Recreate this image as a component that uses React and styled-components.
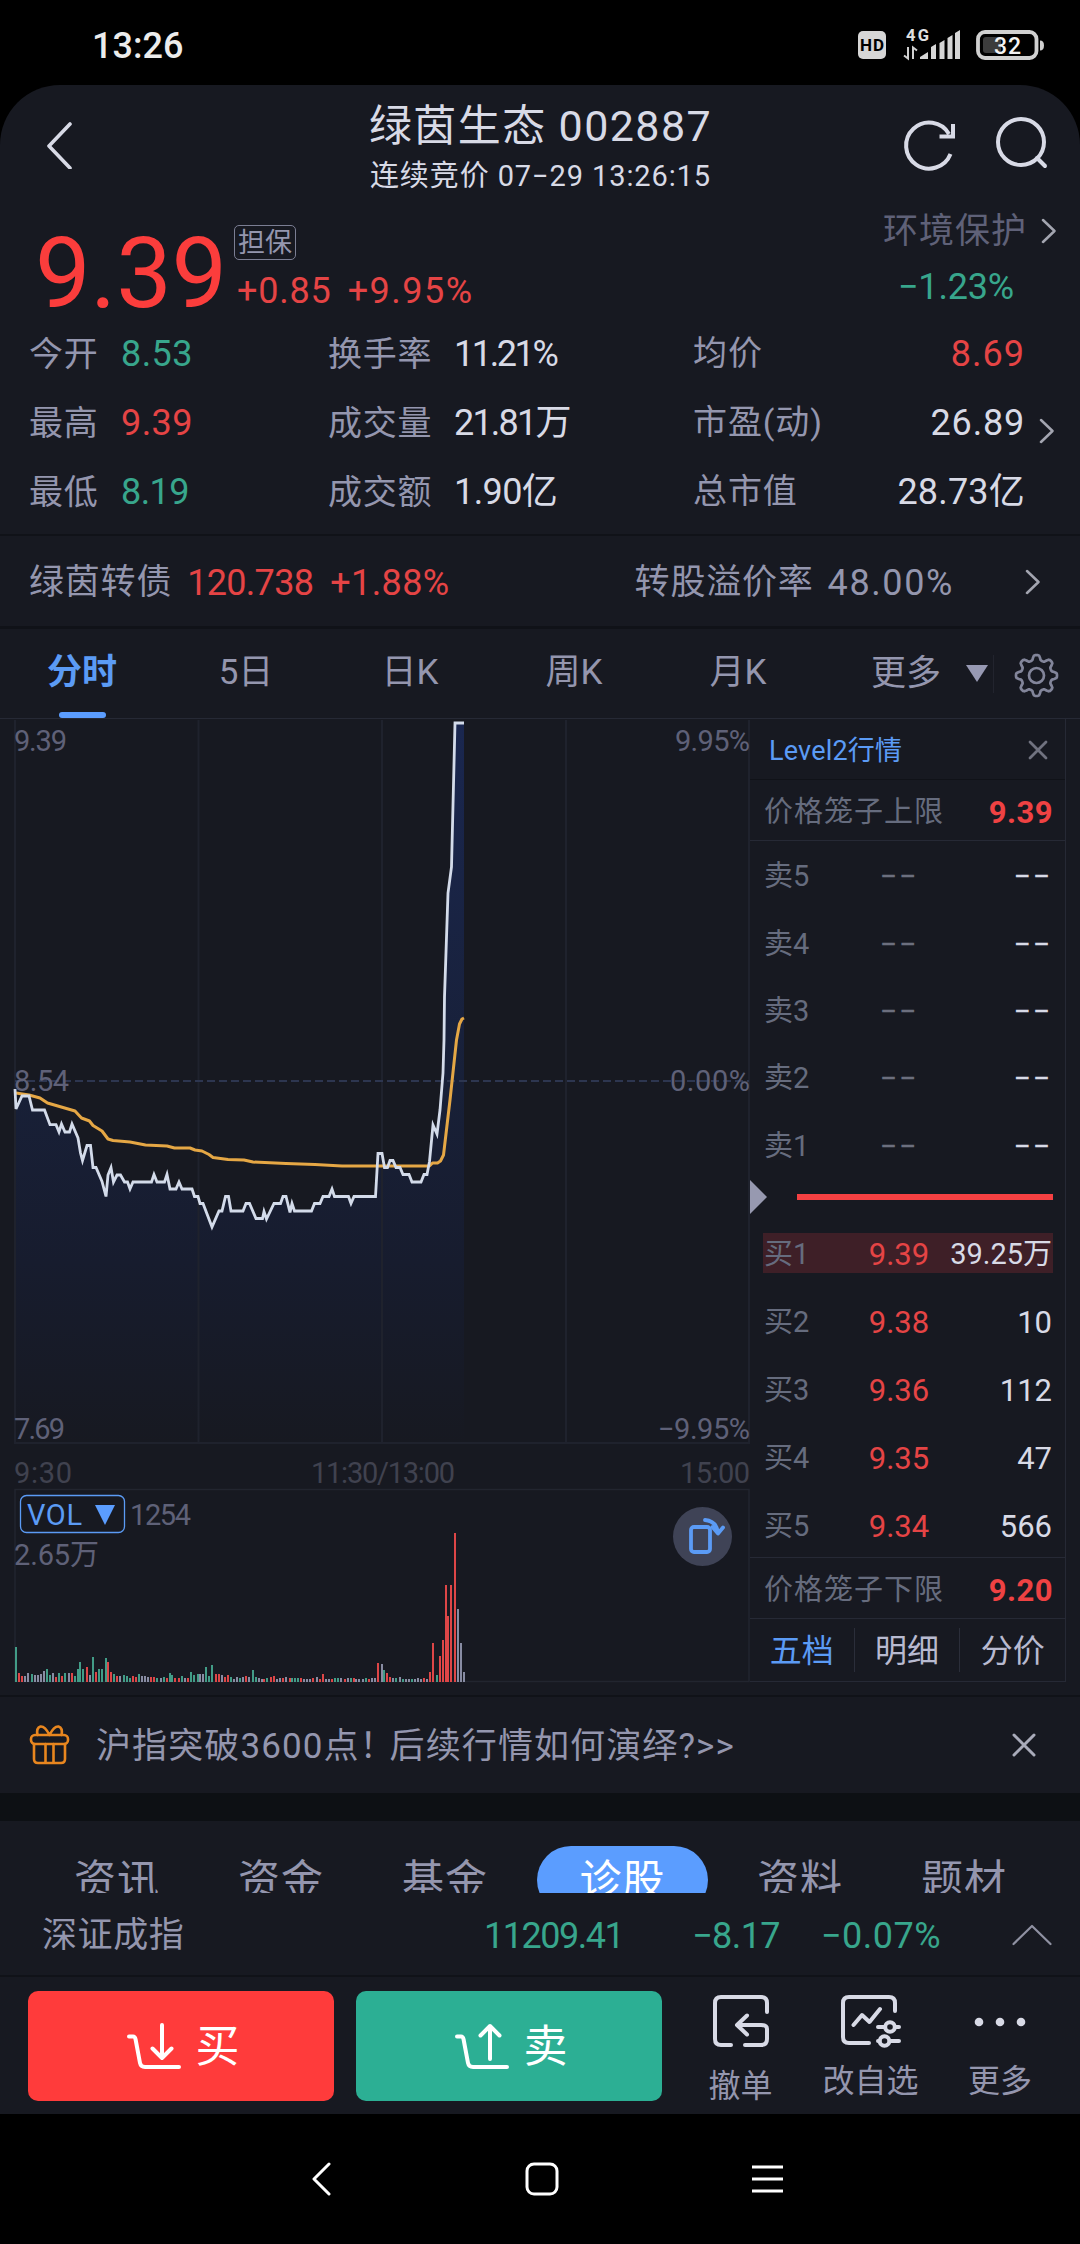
import React from 'react'

import styled, { createGlobalStyle } from 'styled-components'

const colors = {
    bg: '#171921',
    light: '#d8dae6',
    label: '#9496ae',
    slate: '#666c7e',
    dim: '#5f6178',
    faint: '#40424f',
    line: '#22242f',
    dark: '#101218',
    red: '#e54445',
    green: '#38a68c',
    blue: '#5b9bf5',
}

const GlobalStyle = createGlobalStyle`
    * {
        box-sizing: border-box;
    }
    body {
        margin: 0;
        background-color: black;
        font-family: Roboto, "Noto Sans CJK SC", sans-serif;
    }
`
const Screen = styled.div`
    width: 1080px;
    height: 2244px;
    display: flex;
    flex-direction: column;
    background-color: black;
    overflow: hidden;
`
const Text = styled.span`
    padding-top: 2px;
    font-size: ${(props) => props.$size || 36}px;
    font-weight: ${(props) => props.$weight || 400};
    letter-spacing: ${(props) => props.$space || 0}px;
    color: ${(props) => colors[props.$color] || props.$color || colors.label};
    line-height: 1;
    white-space: pre;
`
const Tight = styled.span`
    letter-spacing: -5px;
`
const Icon = styled.svg`
    display: block;
    flex: none;
    fill: none;
    stroke: ${(props) => colors[props.$color] || props.$color || colors.light};
    stroke-width: ${(props) => props.$stroke || 4};
    stroke-linecap: round;
    stroke-linejoin: round;
`

/* status bar */
const StatusBar = styled.div`
    height: 85px;
    padding: 4px 36px 0 92px;
    display: flex;
    align-items: center;
    justify-content: space-between;
`

/* app */
const Panel = styled.div`
    height: 2029px;
    display: flex;
    flex-direction: column;
    background-color: ${colors.bg};
    border-radius: 60px 60px 0 0;
    overflow: hidden;
`
const Header = styled.div`
    height: 120px;
    padding: 0 32px 0 46px;
    display: grid;
    grid-template-columns: 150px 1fr 145px;
    align-items: center;
`
const Titles = styled.div`
    display: flex;
    flex-direction: column;
    align-items: center;
    gap: 12px;
    padding: 3px 18px 0 0;
`
const HeaderIcons = styled.div`
    display: flex;
    justify-content: space-between;
`
const Quote = styled.div`
    height: 113px;
    padding: 0 24px 0 31px;
    display: flex;
`
const Price = styled.div`
    width: 203px;
    padding: 19px 0 0 4px;
`
const Change = styled.div`
    flex: 1;
    display: flex;
    flex-direction: column;
    align-items: flex-start;
    gap: 11px;
    padding-top: 20px;
`
const Badge = styled.div`
    width: 62px;
    height: 35px;
    display: flex;
    align-items: center;
    justify-content: center;
    border: 1.5px solid #7b7e93;
    border-radius: 5px;
`
const ChangeRow = styled.div`
    display: flex;
    gap: 16px;
    padding-left: 3px;
`
const Sector = styled.div`
    display: flex;
    flex-direction: column;
    padding-top: 7px;
    gap: 18px;
`
const SectorRow = styled.div`
    display: flex;
    align-items: center;
    gap: 14px;
    padding-left: ${(props) => props.$left || 0}px;
`
const Stats = styled.div`
    height: 216px;
    padding-left: 29px;
    display: flex;
`
const StatGrid = styled.div`
    width: 996px;
    display: grid;
    grid-template-columns: 92px 207px 126px 239px 1fr;
    grid-template-rows: repeat(3, 69px);
    align-items: center;
`
const Spread = styled.div`
    display: flex;
    justify-content: space-between;
`
const StatArrow = styled.div`
    padding: 100px 0 0 14px;
`
const Bond = styled.div`
    height: 95px;
    padding: 1px 40px 0 29px;
    display: flex;
    align-items: center;
    border-top: 2px solid ${colors.dark};
    border-bottom: 3px solid ${colors.dark};
`
const Gap = styled.div`
    width: ${(props) => props.$w}px;
    flex: none;
`
const Spacer = styled.div`
    flex: 1;
`
const PeriodTabs = styled.div`
    height: 90px;
    display: flex;
    border-bottom: 1px solid #262935;
`
const Period = styled.div`
    width: 164px;
    display: flex;
    flex-direction: column;
    align-items: center;
    justify-content: space-between;
    padding-top: 24px;
`
const Underline = styled.div`
    width: 47px;
    height: 6px;
    border-radius: 3px;
    background-color: #5b9dff;
`
const More = styled.div`
    width: 173px;
    height: 87px;
    padding-left: 51px;
    display: flex;
    align-items: center;
    gap: 25px;
`
const TabLine = styled.div`
    width: 1px;
    height: 38px;
    margin: 26px 20px 0 0;
    background-color: #22242e;
`

/* chart and order book */
const Market = styled.div`
    height: 978px;
    display: flex;
    border-bottom: 2px solid ${colors.dark};
`
const Chart = styled.svg`
    display: block;
    width: 750px;
    height: 976px;
    flex: none;
`
const Book = styled.div`
    width: 316px;
    height: 963px;
    display: flex;
    flex-direction: column;
    border-right: 1px solid #262935;
    border-bottom: 1px solid #262935;
`
const BookHead = styled.div`
    height: 61px;
    padding: 2px 17px 0 19px;
    display: flex;
    align-items: center;
    justify-content: space-between;
    border-bottom: 1px solid ${colors.dark};
`
const Cage = styled.div`
    height: 61px;
    padding: 2px 12px 0 14px;
    display: flex;
    align-items: center;
    justify-content: space-between;
    border-bottom: 1px solid #262935;
`
const Asks = styled.div`
    height: 338px;
    padding-top: 1px;
`
const Bids = styled.div`
    height: 343px;
    padding-top: 4px;
    border-bottom: 1px solid #262935;
`
const Level = styled.div`
    height: ${(props) => props.$height}px;
    display: flex;
    align-items: center;
`
const LevelInner = styled.div`
    width: 290px;
    height: 40px;
    margin-left: 13px;
    padding: 0 1px;
    display: grid;
    grid-template-columns: 94px 82px 1fr;
    align-items: center;
    background-color: ${(props) => (props.$active ? '#3e1f27' : 'transparent')};
`
const Center = styled.div`
    display: flex;
    justify-content: center;
`
const VolumeCell = styled.div`
    display: flex;
    justify-content: flex-end;
`
const Ratio = styled.div`
    height: 36px;
    display: flex;
    align-items: center;
    gap: 30px;
`
const RatioBar = styled.div`
    width: 256px;
    height: 6px;
    background-color: #f54042;
`
const BookTabs = styled.div`
    flex: 1;
    display: flex;
    align-items: center;
`
const BookTab = styled.div`
    width: ${(props) => (props.$first ? 104 : 106)}px;
    height: 44px;
    display: flex;
    align-items: center;
    justify-content: center;
    border-left: ${(props) => (props.$first ? 'none' : '1px solid #2b2e3a')};
`

/* promo + lower tabs */
const Promo = styled.div`
    height: 96px;
    padding: 0 44px 0 29px;
    display: flex;
    align-items: center;
    justify-content: space-between;
`
const PromoText = styled.div`
    display: flex;
    align-items: center;
    gap: 25px;
`
const Strip = styled.div`
    height: 28px;
    background-color: #0d1014;
`
const InfoTabs = styled.div`
    height: 72px;
    padding: 25px 34px 0 35px;
    display: flex;
    overflow: hidden;
`
const InfoTab = styled.div`
    width: ${(props) => (props.$active ? 171 : 164)}px;
    margin: ${(props) => (props.$active ? '0 10px' : '0')};
    height: 68px;
    flex: none;
    display: flex;
    align-items: center;
    justify-content: center;
    border-radius: 34px;
    background-color: ${(props) => (props.$active ? '#5b9dff' : 'transparent')};
`
const IndexBar = styled.div`
    height: 84px;
    padding: 1px 28px 0 42px;
    display: flex;
    align-items: center;
    border-bottom: 2px solid ${colors.dark};
`
const IndexName = styled.div`
    width: 442px;
    display: flex;
`
const Actions = styled.div`
    height: 137px;
    padding: 14px 0 0 28px;
    display: flex;
    gap: 22px;
`
const TradeButton = styled.button`
    width: 306px;
    height: 110px;
    padding: 0 0 0 4px;
    display: flex;
    align-items: center;
    justify-content: center;
    gap: 15px;
    border: none;
    border-radius: 10px;
    font-family: inherit;
    background-color: ${(props) => (props.$buy ? '#ff3b3b' : '#2caf94')};
`
const Tools = styled.div`
    flex: 1;
    display: flex;
`
const Tool = styled.div`
    width: ${(props) => props.$width}px;
    display: flex;
    flex-direction: column;
    align-items: center;
    gap: ${(props) => props.$gap}px;
    padding-top: 4px;
`
const NavBar = styled.div`
    height: 130px;
    padding: 0 297px 0 311px;
    display: flex;
    align-items: center;
    justify-content: space-between;
`

const stats = [
    {
        open: ['今开', '8.53', 'green', 0.4],
        trade: ['换手率', '11.21%', -2.4],
        value: ['均价', '8.69', 'red', 1],
    },
    {
        open: ['最高', '9.39', 'red', 0.4],
        trade: ['成交量', '21.81万', -1.8],
        value: ['市盈(动)', '26.89', 'light', 0.8],
    },
    {
        open: ['最低', '8.19', 'green', -0.6],
        trade: ['成交额', '1.90亿', -0.6],
        value: ['总市值', '28.73亿', 'light', 0.2],
    },
]

const asks = ['卖5', '卖4', '卖3', '卖2', '卖1']
const bids = [
    ['买1', '9.39', '39.25万'],
    ['买2', '9.38', '10'],
    ['买3', '9.36', '112'],
    ['买4', '9.35', '47'],
    ['买5', '9.34', '566'],
]

const priceLine =
    '15,369 16,389 22,376 29,376 32.5,390 44.5,390 50,404.7 56,404.7 59,412 61.5,404 65,412 69.5,412 72,404 78,418 80.5,433 82.5,440.5 87,425.5 90.5,425.5 93,447.5 96,447.5 102,461.5 106,476.5 108,455 111,447.5 113.5,462 117,455 120.5,455 124.5,462 127.5,462 130,469 133,462 151.5,462 154,454.5 157,462 164.5,462 167,454.5 170,469 176,469 179,462 182,469 192,469 194.5,476.5 198,476.5 200,483.5 203,483.5 212,507 219,491 222,491 225.5,476.5 228.5,476.5 231,491 243,491 246,483.5 249.5,483.5 256,498.5 262.5,498.5 264,491.5 266.5,499 274,483.5 280.5,483.5 283,476.5 286,476.5 290,492.5 292,483.5 294.5,491 311.5,491 314.5,483.5 320,483.5 323,476.5 329,476.5 332,469 334.5,476.5 348.5,476.5 351,483.5 354,476.5 375.5,476.5 378,433.5 382,433.5 384.5,447.5 387.5,447.5 390,440.5 393,440.5 396,447.5 400,447.5 403,454.5 409,454.5 412,462 421,462 424,454.5 427,454.5 429.5,441.5 433,405 437,414 440,390 443,353 444,320 444.5,277 448,173 451.5,147 455,3 464,3'
const averageLine =
    '16,373 29,375 40,378 47.5,383 75,391 81.5,398 89.5,401 93,405.5 102,411 108,419 113,420.5 130,422 145.5,425 167,426 174.5,428 190,428 195,430 202,431 209,434.5 213,437.5 228,439.5 244,440 253,442 286,443.5 315,444.5 342,446 429.5,446 432.5,443 437.5,443 440.5,441 443.5,435 450,380 456.5,320 459.5,304 462,299 464,298'

// x, height, colour of every minute bar
const volume =
    '16,35,g 19,9,r 22,6,r 25,6,w 28,9,w 32,8,g 35,7,w 38,7,w 41,8,w 44,11,w 47,13,g 50,7,g 53,9,w 56,5,r 59,9,g 62,6,r 65,9,g 69,9,w 72,9,r 75,6,g 78,13,g 80,20,g 83,13,g 87,15,r 90,7,w 93,25,g 96,10,r 99,13,g 102,13,g 106,24,g 108,20,r 111,10,r 114,8,g 117,6,r 120,6,w 124,7,g 127,6,g 130,4,g 133,6,r 136,5,r 139,8,g 142,6,w 145,6,w 148,5,w 151,5,r 154,5,r 157,4,g 161,4,w 164,5,g 167,4,r 170,9,g 172,7,g 175,4,r 179,4,r 182,6,g 185,4,w 188,4,r 191,10,g 194,7,g 198,8,g 200,8,w 203,8,w 206,15,g 209,6,g 212,17,g 216,8,r 219,8,r 222,7,w 225,5,r 228,7,r 231,5,g 234,3,w 237,5,w 240,4,g 243,5,w 246,6,r 249,5,w 253,12,g 256,5,g 259,4,w 262,3,w 264,3,r 267,4,g 271,5,r 274,6,r 277,3,w 280,4,w 283,4,r 286,5,w 290,4,r 292,4,g 295,4,g 298,4,g 301,4,r 304,3,w 307,3,w 310,3,w 313,4,r 317,5,w 320,3,r 323,8,r 326,3,w 329,3,w 332,3,r 335,4,g 338,4,g 341,4,w 345,3,r 348,4,w 351,4,g 354,4,r 356,3,w 359,3,w 363,3,w 366,4,g 369,3,r 372,4,w 375,4,w 378,19,r 382,18,w 384,12,g 387,9,r 390,5,r 393,4,w 396,4,g 400,5,w 403,3,g 406,3,w 409,3,w 412,3,g 415,3,w 418,4,w 421,3,w 424,4,r 427,3,w 430,10,r 433,39,r 437,7,g 440,26,r 443,42,r 446,97,r 448,66,r 451,97,r 455,149,r 458,73,w 461,39,w 464,10,w'
        .split(' ')
        .map((bar) => bar.split(','))
const barColors = { g: '#429c87', r: '#de4647', w: '#888ca3' }

const Chevron = () => (
    <Icon width="15" height="26" viewBox="0 0 15 26" $stroke={2.5} $color="#a3a5b0">
        <path d="M2 2l11.500 11L2 24" />
    </Icon>
)

const Signal = () => (
    <svg width="187" height="36" viewBox="857 27 187 36">
        <rect x="858" y="31" width="28" height="28" rx="5" fill="#d6d6d6" />
        <text x="872" y="51" fontSize="17" fontWeight="700" textAnchor="middle" fill="#000" textLength="24">HD</text>
        <text x="906" y="40.500" fontSize="16.500" fontWeight="700" fill="#e0e0e0" textLength="23">4G</text>
        <path d="M908 47v11.500l-4-3M913 59V47.500l4 3" fill="none" stroke="#d0d0d0" strokeWidth="2" />
        <path d="M920 59v-2l8-5v7zM931 59v-12l5-3v15zM939.500 59V43l5-3v19zM947.500 59V38l5-3v24zM955 59V33l5-3v29z" fill="#d6d6d6" />
        <rect x="978" y="32" width="58.500" height="26" rx="7" fill="none" stroke="#d0d0d0" strokeWidth="3.800" />
        <rect x="983" y="37" width="18" height="16" rx="3" fill="#3c3c3c" />
        <path d="M1040 40.500q4 0 4 5t-4 5z" fill="#d0d0d0" />
        <text x="1007.500" y="53.500" fontSize="23" fontWeight="500" textAnchor="middle" fill="#f2f2f2" textLength="27">32</text>
    </svg>
)

const gearPath = () => {
    const steps = 96
    let d = ''
    for (let i = 0; i <= steps; i++) {
        const a = (i / steps) * Math.PI * 2
        const wave = Math.cos(a * 8)
        const r = 18 + 2.6 * Math.tanh(wave * 2)
        d += `${i ? 'L' : 'M'}${(22.5 + r * Math.cos(a)).toFixed(2)} ${(22.5 + r * Math.sin(a)).toFixed(2)}`
    }
    return d + 'Z'
}

const AxisText = ({ x, y, w, children, end, color = colors.dim }) => (
    <text x={x} y={y} fontSize="29" fill={color} textAnchor={end ? 'end' : 'start'} textLength={w}>
        {children}
    </text>
)

const MinuteChart = () => (
    <Chart viewBox="0 719 750 976">
        <defs>
            <linearGradient id="area" gradientUnits="userSpaceOnUse" x1="0" y1="0" x2="0" y2="723">
                <stop offset="0" stopColor="#1a2750" />
                <stop offset="0.5" stopColor="#182038" />
                <stop offset="0.75" stopColor="#171c2e" />
                <stop offset="1" stopColor="#171921" />
            </linearGradient>
        </defs>
        <g transform="translate(0 720)">
            <polygon points={`${priceLine} 464,722 15,722`} fill="url(#area)" />
        </g>
        <path d="M15 720V1443H749V720M198.500 720V1443M382 720V1443M566 720V1443" fill="none" stroke="#1f222d" strokeWidth="2" />
        <path d="M15 1489.500H749V1681.500H15Z" fill="none" stroke="#22252f" strokeWidth="1.500" />
        <path d="M15 1081H749" stroke="#2d3650" strokeWidth="1.800" strokeDasharray="8 4" />
        <AxisText x="14" y="751" w="53">9.39</AxisText>
        <AxisText x="750" y="751" w="75" end>9.95%</AxisText>
        <AxisText x="14" y="1091" w="55">8.54</AxisText>
        <AxisText x="750" y="1091" w="80" end>0.00%</AxisText>
        <AxisText x="14" y="1439" w="51">7.69</AxisText>
        <AxisText x="750" y="1439" w="92" end>−9.95%</AxisText>
        <AxisText x="14" y="1483" w="58" color={colors.faint}>9:30</AxisText>
        <AxisText x="311" y="1483" w="144" color={colors.faint}>11:30/13:00</AxisText>
        <AxisText x="750" y="1483" w="70" end color={colors.faint}>15:00</AxisText>
        <g transform="translate(0 720)" fill="none">
            <polyline points={averageLine} stroke="#e5a745" strokeWidth="3" strokeLinejoin="round" />
            <polyline points={priceLine} stroke="#d3dbea" strokeWidth="2.800" />
        </g>
        {volume.map(([x, h, c]) => (
            <rect key={x} x={x - 1} y={1682 - h} width="2" height={h} fill={barColors[c]} />
        ))}
        <rect x="20.500" y="1495.500" width="104" height="37" rx="6" fill="none" stroke="#5b9bf5" strokeWidth="1.300" />
        <AxisText x="27" y="1525" w="55" color="#5b9bf5">VOL</AxisText>
        <path d="M95 1505h20l-10 20z" fill="#5b9dff" />
        <AxisText x="130" y="1525" w="61">1254</AxisText>
        <AxisText x="14" y="1565" w="85">2.65万</AxisText>
        <circle cx="702.500" cy="1536.500" r="29.500" fill="#3f4356" />
        <g fill="none" stroke="#5b9bf5" strokeWidth="3.800" strokeLinecap="round" strokeLinejoin="round">
            <rect x="691" y="1527" width="19" height="25" rx="3" />
            <path d="M705 1520q11 1 13 12M712.500 1527l5.500 6.500 5-6" />
        </g>
    </Chart>
)

const App = () => {
    return (
        <Screen>
            <GlobalStyle />
            <StatusBar>
                <Text $size={36} $weight={500} $color="#ececec">13:26</Text>
                <Signal />
            </StatusBar>
            <Panel>
                <Header>
                    <Icon width="27" height="48" viewBox="0 0 27 48" $stroke={3.6}>
                        <path d="M24 3L3 25l21 22" />
                    </Icon>
                    <Titles>
                        <Text $size={43} $space={1.4} $color="light">绿茵生态 002887</Text>
                        <Text $size={29} $space={0.9} $color="light">连续竞价 07−29 13:26:15</Text>
                    </Titles>
                    <HeaderIcons>
                        <Icon width="54" height="58" viewBox="0 0 54 58" $stroke={4}>
                            <path d="M47.500 38A23 23 0 1 1 46 18M50 8v12.500H36.500" strokeLinejoin="miter" strokeLinecap="butt" />
                        </Icon>
                        <Icon width="52" height="58" viewBox="0 0 52 58" $stroke={4}>
                            <circle cx="25" cy="26" r="23" />
                            <path d="M41 42l8 8" />
                        </Icon>
                    </HeaderIcons>
                </Header>
                <Quote>
                    <Price>
                        <Text $size={99} $space={-0.3} $color="#fb3d3c">9.39</Text>
                    </Price>
                    <Change>
                        <Badge>
                            <Text $size={27}>担保</Text>
                        </Badge>
                        <ChangeRow>
                            <Text $space={0.8} $color="red">+0.85</Text>
                            <Text $space={1.5} $color="red">+9.95%</Text>
                        </ChangeRow>
                    </Change>
                    <Sector>
                        <SectorRow>
                            <Text $size={35} $space={1} $color="dim">环境保护</Text>
                            <Chevron />
                        </SectorRow>
                        <SectorRow $left={15}>
                            <Text $space={-0.2} $color="green">−1.23%</Text>
                        </SectorRow>
                    </Sector>
                </Quote>
                <Stats>
                    <StatGrid>
                        {stats.map(({ open, trade, value }) => (
                            <React.Fragment key={open[0]}>
                                <Text $size={34} $space={0.8}>{open[0]}</Text>
                                <Text $space={open[3]} $color={open[2]}>{open[1]}</Text>
                                <Text $size={34} $space={0.8}>{trade[0]}</Text>
                                <Text $space={trade[2]} $color="light">{trade[1]}</Text>
                                <Spread>
                                    <Text $size={34} $space={0.9}>{value[0]}</Text>
                                    <Text $space={value[3]} $color={value[2]}>{value[1]}</Text>
                                </Spread>
                            </React.Fragment>
                        ))}
                    </StatGrid>
                    <StatArrow>
                        <Chevron />
                    </StatArrow>
                </Stats>
                <Bond>
                    <Text $size={35} $space={0.8}>绿茵转债</Text>
                    <Gap $w={15} />
                    <Text $space={-0.7} $color="red">120.738</Text>
                    <Gap $w={17} />
                    <Text $space={0.4} $color="red">+1.88%</Text>
                    <Gap $w={185} />
                    <Text $size={35} $space={0.8}>转股溢价率</Text>
                    <Gap $w={14} />
                    <Text $space={1.6}>48.00%</Text>
                    <Spacer />
                    <Chevron />
                </Bond>
                <PeriodTabs>
                    <Period>
                        <Text $size={35} $weight={700} $color="blue">分时</Text>
                        <Underline />
                    </Period>
                    <Period><Text $size={35}>5日</Text></Period>
                    <Period><Text $size={35}>日K</Text></Period>
                    <Period><Text $size={35}>周K</Text></Period>
                    <Period><Text $size={35}>月K</Text></Period>
                    <More>
                        <Text $size={35}>更多</Text>
                        <svg width="22" height="18">
                            <path d="M0 1h22L11 18z" fill="#9799b3" />
                        </svg>
                    </More>
                    <TabLine />
                    <Icon width="45" height="90" viewBox="0 -24 45 90" $stroke={2.7} $color="#82859a">
                        <path d={gearPath()} />
                        <circle cx="22.500" cy="22.500" r="7.500" />
                    </Icon>
                </PeriodTabs>
                <Market>
                    <MinuteChart />
                    <Book>
                        <BookHead>
                            <Text $size={27} $space={0.2} $color="blue">Level2行情</Text>
                            <Icon width="20" height="20" viewBox="0 0 20 20" $stroke={2.8} $color="#70727f">
                                <path d="M2 2l16 16M18 2L2 18" />
                            </Icon>
                        </BookHead>
                        <Cage>
                            <Text $size={29} $space={1} $color="slate">价格笼子上限</Text>
                            <Text $size={31} $weight={700} $space={0.5} $color="#ef4243">9.39</Text>
                        </Cage>
                        <Asks>
                            {asks.map((name) => (
                                <Level key={name} $height={67.4}>
                                    <LevelInner>
                                        <Text $size={29} $color="slate">{name}</Text>
                                        <Center>
                                            <Text $size={31} $space={1.5} $color="#6c6f7e">−−</Text>
                                        </Center>
                                        <VolumeCell>
                                            <Text $size={31} $space={1.5} $color="light">−−</Text>
                                        </VolumeCell>
                                    </LevelInner>
                                </Level>
                            ))}
                        </Asks>
                        <Ratio>
                            <svg width="17" height="34">
                                <path d="M0 0L17 17L0 34z" fill="#9799b0" />
                            </svg>
                            <RatioBar />
                        </Ratio>
                        <Bids>
                            {bids.map(([name, price, count], i) => (
                                <Level key={name} $height={68}>
                                    <LevelInner $active={i === 0}>
                                        <Text $size={29} $color="slate">{name}</Text>
                                        <Center>
                                            <Text $size={31} $color="red">{price}</Text>
                                        </Center>
                                        <VolumeCell>
                                            <Text $size={i === 0 ? 29 : 31} $color="light">{count}</Text>
                                        </VolumeCell>
                                    </LevelInner>
                                </Level>
                            ))}
                        </Bids>
                        <Cage>
                            <Text $size={29} $space={1} $color="slate">价格笼子下限</Text>
                            <Text $size={31} $weight={700} $space={0.5} $color="#ef4243">9.20</Text>
                        </Cage>
                        <BookTabs>
                            <BookTab $first><Text $size={32} $color="blue">五档</Text></BookTab>
                            <BookTab><Text $size={32} $color="#b8bad0">明细</Text></BookTab>
                            <BookTab><Text $size={32} $color="#b8bad0">分价</Text></BookTab>
                        </BookTabs>
                    </Book>
                </Market>
                <Promo>
                    <PromoText>
                        <Icon width="42" height="42" viewBox="0 0 42 42" $stroke={2.6} $color="#e8861f">
                            <rect x="2" y="11" width="37" height="9" rx="4" />
                            <path d="M5 20v15q0 4 4 4h23q4 0 4-4V20M16.500 20v19M24.500 20v19M20.500 11Q16 2 11.500 2.500Q7 4 8.500 11M20.500 11Q25 2 29.500 2.500Q34 4 32.500 11" />
                        </Icon>
                        <Text $size={35} $space={1.1}>沪指突破3600点<Tight>！</Tight>后续行情如何演绎?&gt;&gt;</Text>
                    </PromoText>
                    <Icon width="24" height="24" viewBox="0 0 24 24" $stroke={3} $color="#a9abba">
                        <path d="M2 2l20 20M22 2L2 22" />
                    </Icon>
                </Promo>
                <Strip />
                <InfoTabs>
                    {['资讯', '资金', '基金', '诊股', '资料', '题材'].map((name) => (
                        <InfoTab key={name} $active={name === '诊股'}>
                            <Text $size={42} $space={1} $color={name === '诊股' ? 'white' : 'label'}>{name}</Text>
                        </InfoTab>
                    ))}
                </InfoTabs>
                <IndexBar>
                    <IndexName><Text $size={35} $space={0.6}>深证成指</Text></IndexName>
                    <Text $space={-1.5} $color="green">11209.41</Text>
                    <Gap $w={69} />
                    <Text $space={-0.6} $color="green">−8.17</Text>
                    <Gap $w={41} />
                    <Text $space={0.5} $color="green">−0.07%</Text>
                    <Spacer />
                    <Icon width="40" height="22" viewBox="0 0 40 22" $stroke={2.2} $color="#8f91a2">
                        <path d="M1.500 20L20 2l18.500 18" />
                    </Icon>
                </IndexBar>
                <Actions>
                    <TradeButton $buy>
                        <Icon width="54" height="48" viewBox="0 0 54 48" $color="white">
                            <path d="M2 14.500h4q2 0 2.600 3L13 41q.8 4 5 4h34M35 3v33M25.500 26.500L35 36l9.500-9.500" />
                        </Icon>
                        <Text $size={44} $color="white">买</Text>
                    </TradeButton>
                    <TradeButton>
                        <Icon width="54" height="48" viewBox="0 0 54 48" $color="white">
                            <path d="M2 14.500h4q2 0 2.600 3L13 41q.8 4 5 4h34M35 37V4M25.500 13.500L35 4l9.500 9.500" />
                        </Icon>
                        <Text $size={44} $color="white">卖</Text>
                    </TradeButton>
                    <Tools>
                        <Tool $width={113} $gap={19}>
                            <Icon width="56" height="54" viewBox="0 0 56 54">
                                <path d="M54 17V8q0-6-6-6H8Q2 2 2 8v36q0 6 6 6h10M32 50h16q6 0 6-6V34q0-4-6-4H25M34 20.500L24 30l10 9.500" />
                            </Icon>
                            <Text $size={32}>撤单</Text>
                        </Tool>
                        <Tool $width={147} $gap={14}>
                            <Icon width="60" height="54" viewBox="0 0 60 54">
                                <path d="M54 16V8q0-6-6-6H8Q2 2 2 8v34q0 6 6 6h20M12.500 30L21 20l7.500 7L39 14M37 32h6M55 32h3M37 46h1.500M50 46h8" />
                                <circle cx="49" cy="32" r="4.800" />
                                <circle cx="43.500" cy="46" r="4.800" />
                            </Icon>
                            <Text $size={32}>改自选</Text>
                        </Tool>
                        <Tool $width={112} $gap={14}>
                            <svg width="54" height="54">
                                <circle cx="6" cy="27" r="4.300" fill="#d8dae6" />
                                <circle cx="27" cy="27" r="4.300" fill="#d8dae6" />
                                <circle cx="48" cy="27" r="4.300" fill="#d8dae6" />
                            </svg>
                            <Text $size={32}>更多</Text>
                        </Tool>
                    </Tools>
                </Actions>
            </Panel>
            <NavBar>
                <Icon width="20" height="34" viewBox="0 0 20 34" $stroke={3} $color="white">
                    <path d="M18 2L3 17l15 15" />
                </Icon>
                <Icon width="34" height="34" viewBox="0 0 34 34" $stroke={3} $color="white">
                    <rect x="2" y="2" width="30" height="30" rx="7" />
                </Icon>
                <Icon width="31" height="28" viewBox="0 0 31 28" $stroke={3} $color="white">
                    <path d="M0 2h31M0 14h31M0 26h31" strokeLinecap="butt" />
                </Icon>
            </NavBar>
        </Screen>
    )
}

export default App
